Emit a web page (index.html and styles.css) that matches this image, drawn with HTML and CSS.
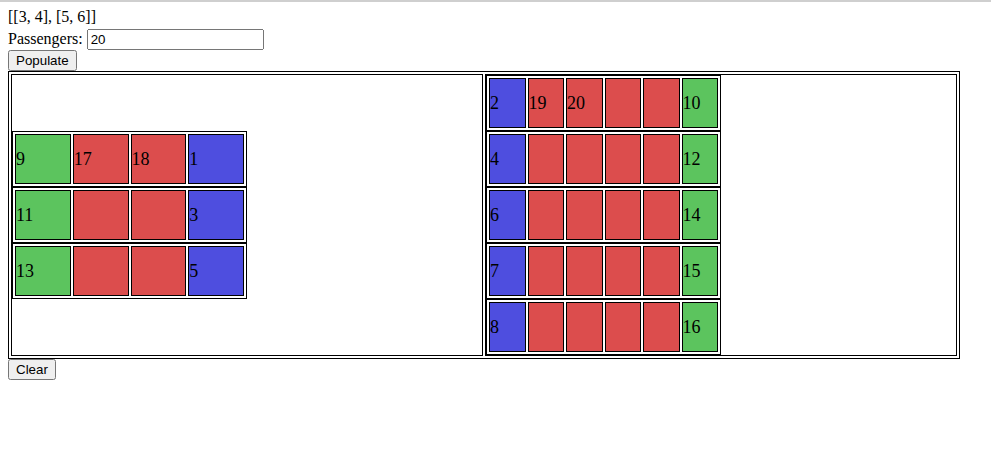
FILE: index.html
```html
<!DOCTYPE html>
<html lang="en">
<head>
  <meta charset="UTF-8">
  <title>Seats</title>
  <link rel="stylesheet" href="styles.css">
</head>
<body>
  <div id="result">[[3, 4], [5, 6]]</div>
  <div>
    <label for="passengers">Passengers:</label>
    <input type="text" id="passengers" value="20">
  </div>
  <button onclick="populate()">Populate</button>

  <!-- plane layout -->
  <table class="plane">
    <tr>
      <td class="side">
        <table class="row"><tr><td class="window">9</td><td class="middle">17</td><td class="middle">18</td><td class="aisle">1</td></tr></table>
        <table class="row"><tr><td class="window">11</td><td class="middle"></td><td class="middle"></td><td class="aisle">3</td></tr></table>
        <table class="row"><tr><td class="window">13</td><td class="middle"></td><td class="middle"></td><td class="aisle">5</td></tr></table>
      </td>
      <td class="side">
        <table class="row"><tr><td class="aisle">2</td><td class="middle">19</td><td class="middle">20</td><td class="middle"></td><td class="middle"></td><td class="window">10</td></tr></table>
        <table class="row"><tr><td class="aisle">4</td><td class="middle"></td><td class="middle"></td><td class="middle"></td><td class="middle"></td><td class="window">12</td></tr></table>
        <table class="row"><tr><td class="aisle">6</td><td class="middle"></td><td class="middle"></td><td class="middle"></td><td class="middle"></td><td class="window">14</td></tr></table>
        <table class="row"><tr><td class="aisle">7</td><td class="middle"></td><td class="middle"></td><td class="middle"></td><td class="middle"></td><td class="window">15</td></tr></table>
        <table class="row"><tr><td class="aisle">8</td><td class="middle"></td><td class="middle"></td><td class="middle"></td><td class="middle"></td><td class="window">16</td></tr></table>
      </td>
    </tr>
  </table>

  <button onclick="clearSeats()">Clear</button>

<script>
  function populate() {
    // seats are already filled in the markup
  }

  function clearSeats() {
    const cells = document.querySelectorAll('.row td');
    for (const cell of cells) {
      cell.textContent = '';
    }
  }
</script>
</body>
</html>
```

FILE: styles.css
```css
html {
  background: linear-gradient(#cfcfcf 0 2px, #fff 2px) no-repeat;
}

body {
  margin: 8px;
  font-family: "Liberation Serif", serif;
  font-size: 16px;
  color: #000;
}

button,
input {
  font-family: "Liberation Sans", Arial, sans-serif;
  font-size: 13.33px;
}

#passengers {
  box-sizing: border-box;
  width: 177px;
  height: 21px;
  margin: 3px 0 0;
}

.plane {
  width: 952px;
  border: 1px solid #000;
  border-spacing: 2px;
}

.side {
  width: 50%;
  border: 1px solid #000;
  padding: 0;
}

.row {
  width: 50%;
  table-layout: fixed;
  border: 1px solid #000;
  border-spacing: 2px;
}

.row td {
  box-sizing: border-box;
  height: 50px;
  padding: 1px 0;
  border: 1px solid #000;
  font-size: 18px;
}

.window {
  background: #5cc45e;
}

.middle {
  background: #dc4d4d;
}

.aisle {
  background: #4e4edf;
}
```
